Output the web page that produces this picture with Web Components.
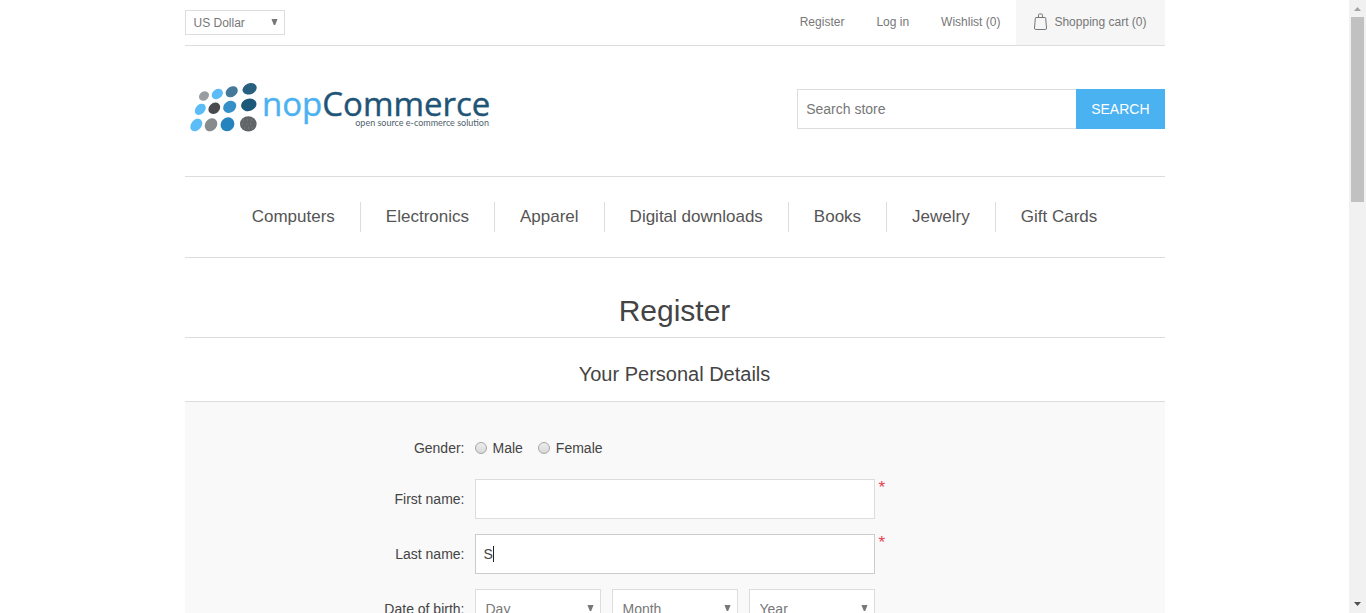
<!DOCTYPE html>
<html lang="en">
<head>
<meta charset="utf-8">
<title>nopCommerce demo store. Register</title>
<style>
  html, body { margin: 0; height: 100%; }
  body {
    font: 14px/20px "Liberation Sans", Arial, sans-serif;
    color: #444;
    background: #fff;
    overflow: hidden;
  }
</style>
</head>
<body>
<store-page></store-page>

<script>
const SELECT_CSS = `
  select {
    appearance: none;
    box-sizing: border-box;
    margin: 0;
    border: 1px solid #ddd;
    border-radius: 0;
    background: #fff url("data:image/svg+xml,%3Csvg xmlns='http://www.w3.org/2000/svg' width='7' height='8'%3E%3Cpath d='M0.500 0h6L4.200 6H2.800z' fill='%23777'/%3E%3C/svg%3E") no-repeat right 6px center;
    font-family: inherit;
    color: #777;
  }`;

function define(name, html) {
  const template = document.createElement('template');
  template.innerHTML = html;
  customElements.define(name, class extends HTMLElement {
    constructor() {
      super();
      this.attachShadow({ mode: 'open' }).append(template.content.cloneNode(true));
    }
  });
}

define('top-bar', `
  <style>
    :host { display: flex; justify-content: space-between; align-items: center; height: 45px; border-bottom: 1px solid #ddd; font-size: 12px; }
    ${SELECT_CSS}
    select { width: 100px; height: 25px; padding: 0 8px; font-size: 12px; }
    nav { display: flex; align-self: stretch; }
    a { display: flex; align-items: center; padding: 0 16px 2px; color: #777; text-decoration: none; }
    .cart { gap: 7px; padding-left: 18px; padding-right: 18px; background: #f6f6f6; }
  </style>
  <select aria-label="Currency"><option>US Dollar</option><option>Euro</option></select>
  <nav aria-label="Account">
    <a href="#register">Register</a>
    <a href="#login">Log in</a>
    <a href="#wishlist">Wishlist (0)</a>
    <a class="cart" href="#cart">
      <svg width="13" height="17" viewBox="0 0 13 17" fill="none" stroke="#777" aria-hidden="true">
        <path d="M2 4.500h9q.6 0 .7.700l.8 9.800q.1 1.500-1.200 1.500H1.700q-1.300 0-1.200-1.500l.8-9.800q.1-.7.700-.7zM4.500 4.500V2.200q0-1.200 1-1.200h2q1 0 1 1.200v2.300"/>
      </svg>
      <span>Shopping cart (0)</span>
    </a>
  </nav>`);

define('store-logo', `
  <style>
    :host { display: block; }
    a, svg { display: block; }
    .name { font: 33px "Open Sans", "Noto Sans", sans-serif; }
    .tagline { font: 9px Lato, "Open Sans", sans-serif; }
  </style>
  <a href="#home" aria-label="nopCommerce home">
    <svg width="310" height="56" viewBox="0 0 310 56">
      <ellipse cx="19" cy="15" rx="5.400" ry="4.400" transform="rotate(-38 19 15)" fill="#999da1"/>
      <ellipse cx="32.300" cy="13" rx="6" ry="4.700" transform="rotate(-35 32.300 13)" fill="#5bbcf7"/>
      <ellipse cx="46.700" cy="10.700" rx="6.500" ry="5" transform="rotate(-32 46.700 10.700)" fill="#46789a"/>
      <ellipse cx="64.600" cy="7.800" rx="7.300" ry="5.500" transform="rotate(-22 64.600 7.800)" fill="#29607f"/>
      <ellipse cx="15.300" cy="28.300" rx="6.300" ry="4.700" transform="rotate(-48 15.300 28.300)" fill="#5bbcf7"/>
      <ellipse cx="29.300" cy="27.300" rx="6.400" ry="5.200" transform="rotate(-42 29.300 27.300)" fill="#484a4d"/>
      <ellipse cx="44.700" cy="25.800" rx="6.900" ry="5.700" transform="rotate(-35 44.700 25.800)" fill="#3590c8"/>
      <ellipse cx="63.800" cy="23.800" rx="7.800" ry="6.200" transform="rotate(-18 63.800 23.800)" fill="#1c587a"/>
      <ellipse cx="11.300" cy="44" rx="7" ry="5.200" transform="rotate(-50 11.300 44)" fill="#5bbcf7"/>
      <ellipse cx="26" cy="43.800" rx="7" ry="5.800" transform="rotate(-50 26 43.800)" fill="#888b8e"/>
      <ellipse cx="42.500" cy="43.300" rx="7.300" ry="6.600" transform="rotate(-45 42.500 43.300)" fill="#2584be"/>
      <ellipse cx="63.300" cy="42.800" rx="8.400" ry="7.600" fill="#626568"/>
      <path d="M58 39h10M57 43h12M59 47h9" stroke="#84878a" stroke-dasharray="1 3"/>
      <text class="name" x="77" y="35" fill="#4ab2f1" stroke="#4ab2f1" stroke-width=".4">nop<tspan fill="#1f5476" stroke="#1f5476">Commerce</tspan></text>
      <text class="tagline" x="304" y="45" text-anchor="end" fill="#4f5f6c">open source e-commerce solution</text>
    </svg>
  </a>`);

define('store-search', `
  <style>
    :host { display: block; }
    form { display: flex; height: 40px; }
    input { box-sizing: border-box; width: 279px; padding: 0 8px; border: 1px solid #ddd; border-right: 0; border-radius: 0; font: inherit; color: #777; }
    input::placeholder { color: #777; }
    button { padding: 0 15px; border: 0; background: #4ab2f1; font: inherit; color: #fff; text-transform: uppercase; }
  </style>
  <form role="search">
    <input type="text" aria-label="Search store" placeholder="Search store">
    <button type="button">Search</button>
  </form>`);

define('category-menu', `
  <style>
    :host { display: block; padding: 25px 0; border-top: 1px solid #ddd; border-bottom: 1px solid #ddd; font-size: 17px; line-height: 30px; }
    ul { display: flex; justify-content: center; margin: 0; padding: 0; list-style: none; }
    li { padding: 0 25px; }
    li + li { border-left: 1px solid #ddd; }
    a { display: block; color: #555; text-decoration: none; }
  </style>
  <nav aria-label="Categories"><ul>
    <li><a href="#computers">Computers</a></li>
    <li><a href="#electronics">Electronics</a></li>
    <li><a href="#apparel">Apparel</a></li>
    <li><a href="#digital">Digital downloads</a></li>
    <li><a href="#books">Books</a></li>
    <li><a href="#jewelry">Jewelry</a></li>
    <li><a href="#gift-cards">Gift Cards</a></li>
  </ul></nav>`);

/* One line of the form: a right-aligned label, the field, and what follows it. */
define('form-row', `
  <style>
    :host { display: grid; grid-template-columns: 1fr 400px 1fr; align-items: center; min-height: 40px; }
    .label { padding-right: 10px; text-align: right; }
    .after { align-self: start; padding-left: 4px; font-size: 17px; line-height: 18px; color: #e4434b; }
  </style>
  <div class="label"><slot name="label"></slot></div>
  <div><slot></slot></div>
  <div class="after"><slot name="after"></slot></div>`);

define('register-form', `
  <style>
    :host { display: block; }
    h1, h2 { margin: 0; font-weight: 400; text-align: center; color: #444; }
    h1 { padding: 33px 0 6px; border-bottom: 1px solid #ddd; font-size: 30px; line-height: 40px; }
    h2 { padding: 20px 0 11px; font-size: 20px; line-height: 32px; }
    form { display: grid; gap: 15px; padding: 30px 0; border-top: 1px solid #ddd; background: #f9f9f9; }
    form-row.gender { min-height: 32px; }
    .choices { display: flex; align-items: center; gap: 15px; }
    .choices span { display: flex; align-items: center; gap: 6px; }
    input[type=radio] { appearance: none; box-sizing: border-box; width: 12px; height: 12px; margin: 0; border: 1px solid #a6a6a6; border-radius: 50%; background: linear-gradient(#eee, #d8d8d8); }
    input[type=text] { display: block; box-sizing: border-box; width: 100%; height: 40px; padding: 0 8px; border: 1px solid #ddd; border-radius: 0; background: #fff; font: inherit; color: #444; outline: none; }
    .active { position: relative; }
    .active input[type=text] { border-color: #ccc; caret-color: transparent; }
    .caret { position: absolute; left: 18px; top: 12px; width: 1px; height: 16px; background: #222; }
    ${SELECT_CSS}
    .dates { display: grid; grid-template-columns: repeat(3, 1fr); gap: 11px; }
    .dates select { height: 40px; padding: 0 10px; font-size: 14px; }
  </style>
  <h1>Register</h1>
  <h2>Your Personal Details</h2>
  <form>
    <form-row class="gender">
      <span slot="label">Gender:</span>
      <div class="choices">
        <span><input type="radio" id="male" name="gender"><label for="male">Male</label></span>
        <span><input type="radio" id="female" name="gender"><label for="female">Female</label></span>
      </div>
    </form-row>
    <form-row>
      <label slot="label" for="first">First name:</label>
      <input type="text" id="first" required>
      <span slot="after">*</span>
    </form-row>
    <form-row>
      <label slot="label" for="last">Last name:</label>
      <div class="active"><input type="text" id="last" value="S" required><span class="caret"></span></div>
      <span slot="after">*</span>
    </form-row>
    <form-row>
      <label slot="label" for="day">Date of birth:</label>
      <div class="dates">
        <select id="day"><option>Day</option></select>
        <select aria-label="Month"><option>Month</option></select>
        <select aria-label="Year"><option>Year</option></select>
      </div>
    </form-row>
  </form>`);

define('page-scrollbar', `
  <style>
    :host { display: flex; flex-direction: column; background: #f1f1f1; }
    .arrow { flex: none; display: block; }
    .track { flex: 1; padding: 0 2px; }
    .thumb { height: 32%; background: #c1c1c1; }
  </style>
  <svg class="arrow" width="17" height="17" aria-hidden="true"><path d="M5 11h7L8.500 7z" fill="#a3a3a3"/></svg>
  <div class="track"><div class="thumb"></div></div>
  <svg class="arrow" width="17" height="17" aria-hidden="true"><path d="M5 6h7L8.500 10z" fill="#505050"/></svg>`);

define('store-page', `
  <style>
    :host { display: grid; grid-template-columns: 1fr 17px; height: 100vh; overflow: hidden; }
    .view { overflow: hidden; }
    .wrap { max-width: 980px; margin: 0 auto; }
    header { display: flex; justify-content: space-between; align-items: center; height: 40px; padding: 43px 0 47px; }
  </style>
  <div class="view">
    <div class="wrap">
      <top-bar></top-bar>
      <header><store-logo></store-logo><store-search></store-search></header>
      <category-menu></category-menu>
      <main><register-form></register-form></main>
    </div>
  </div>
  <page-scrollbar></page-scrollbar>`);
</script>
</body>
</html>
